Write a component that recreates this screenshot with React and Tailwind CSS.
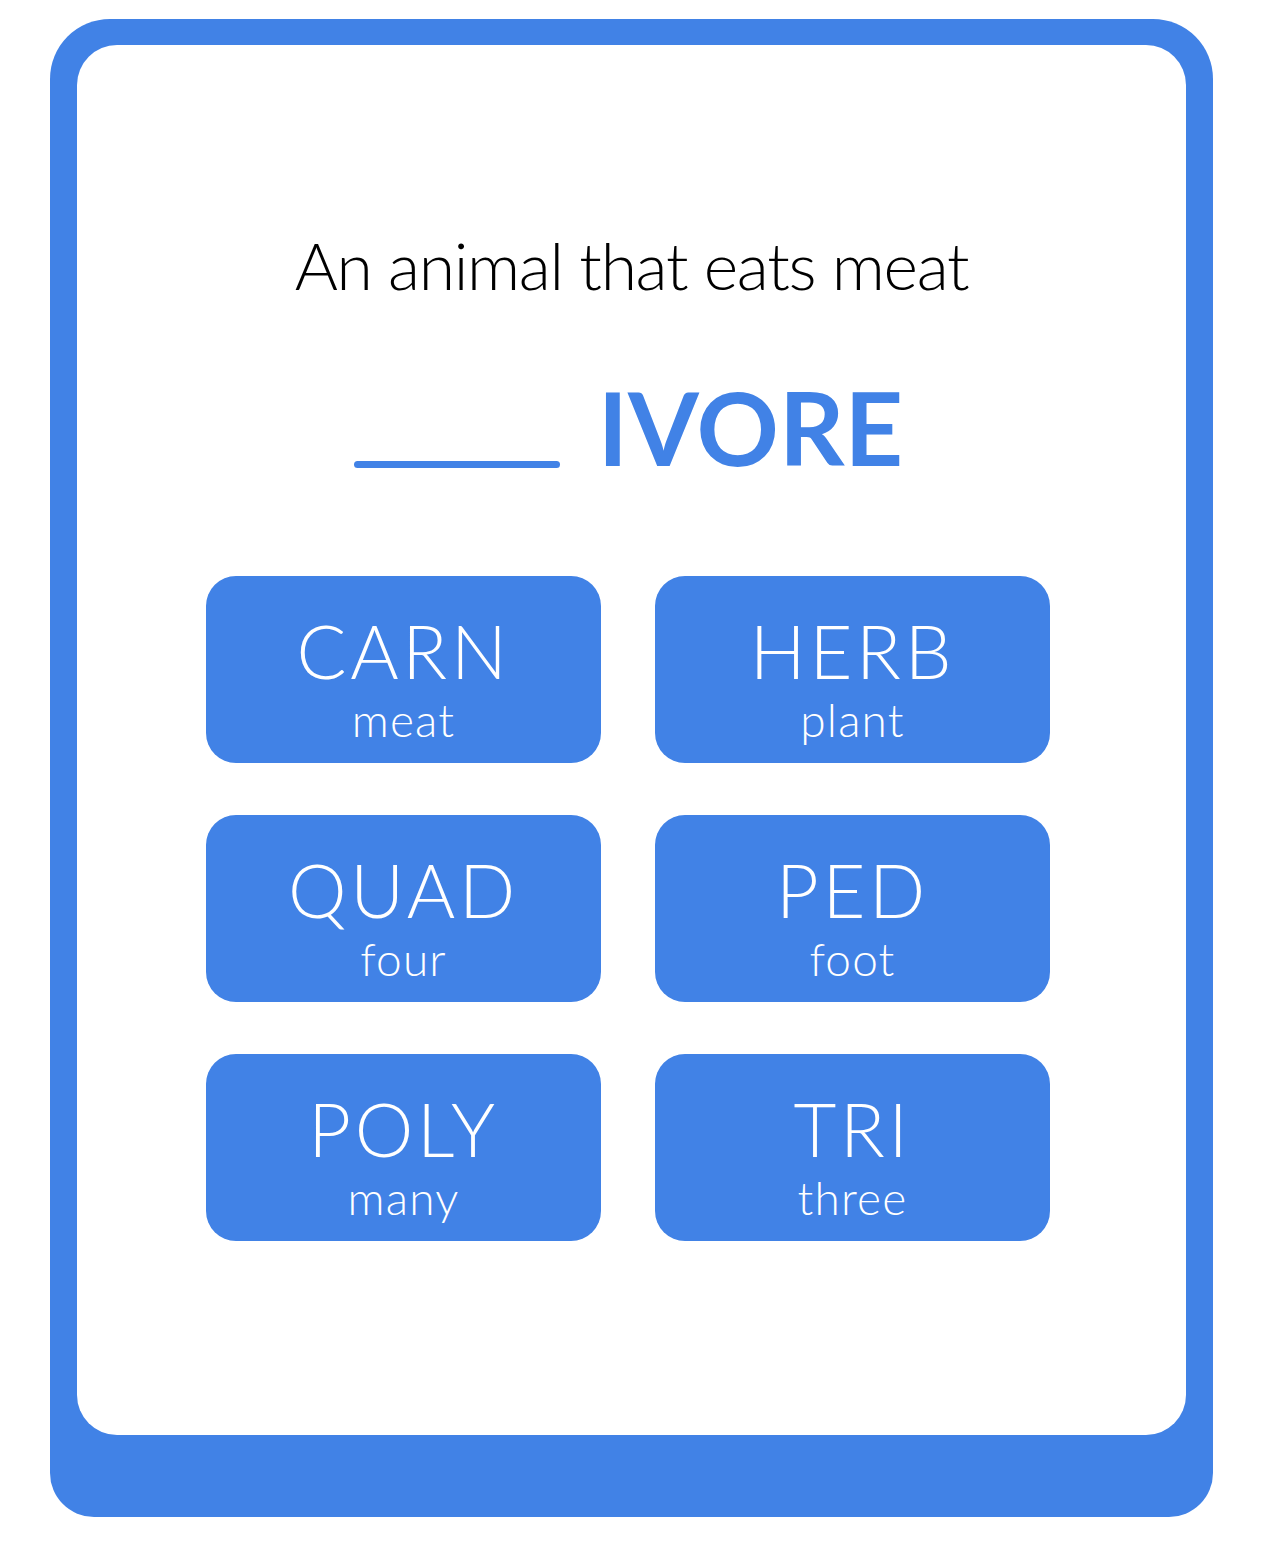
import React from 'react';

const parts = [
  { root: 'CARN', meaning: 'meat' },
  { root: 'HERB', meaning: 'plant' },
  { root: 'QUAD', meaning: 'four' },
  { root: 'PED', meaning: 'foot' },
  { root: 'POLY', meaning: 'many' },
  { root: 'TRI', meaning: 'three' },
];

const App = () => {
  return (
    <div className="min-h-screen bg-white px-[50px] pt-[19px] font-['Lato','Open_Sans',sans-serif]">
      <div className="rounded-t-[60px] rounded-b-[44px] bg-[#4182e6] px-[27px] pt-[26px] pb-[82px]">
        <div className="flex h-[1390px] flex-col items-center rounded-[40px] bg-white">
          {/* Clue */}
          <h1 className="mt-[187px] text-[66px] font-light leading-none tracking-[-0.02em] text-black">
            An animal that eats meat
          </h1>

          {/* Word with blank */}
          <div className="mt-[78px] flex items-end gap-[38px] pr-[6px]">
            <div className="mb-[10px] h-[7px] w-[206px] rounded-full bg-[#4182e6]"></div>
            <span className="text-[102px] font-bold leading-none text-[#4182e6]">IVORE</span>
          </div>

          {/* Root options */}
          <div className="mt-[98px] grid w-[844px] grid-cols-2 gap-x-[54px] gap-y-[52px] self-start ml-[129px]">
            {parts.map((part) => (
              <button
                key={part.root}
                className="flex h-[187px] flex-col items-center rounded-[30px] bg-[#4182e6] pt-[38px] text-white"
              >
                <span className="text-[74px] font-light leading-none tracking-wider">{part.root}</span>
                <span className="mt-[9px] text-[46px] font-light leading-none tracking-wide">{part.meaning}</span>
              </button>
            ))}
          </div>
        </div>
      </div>
    </div>
  );
};

export default App;
